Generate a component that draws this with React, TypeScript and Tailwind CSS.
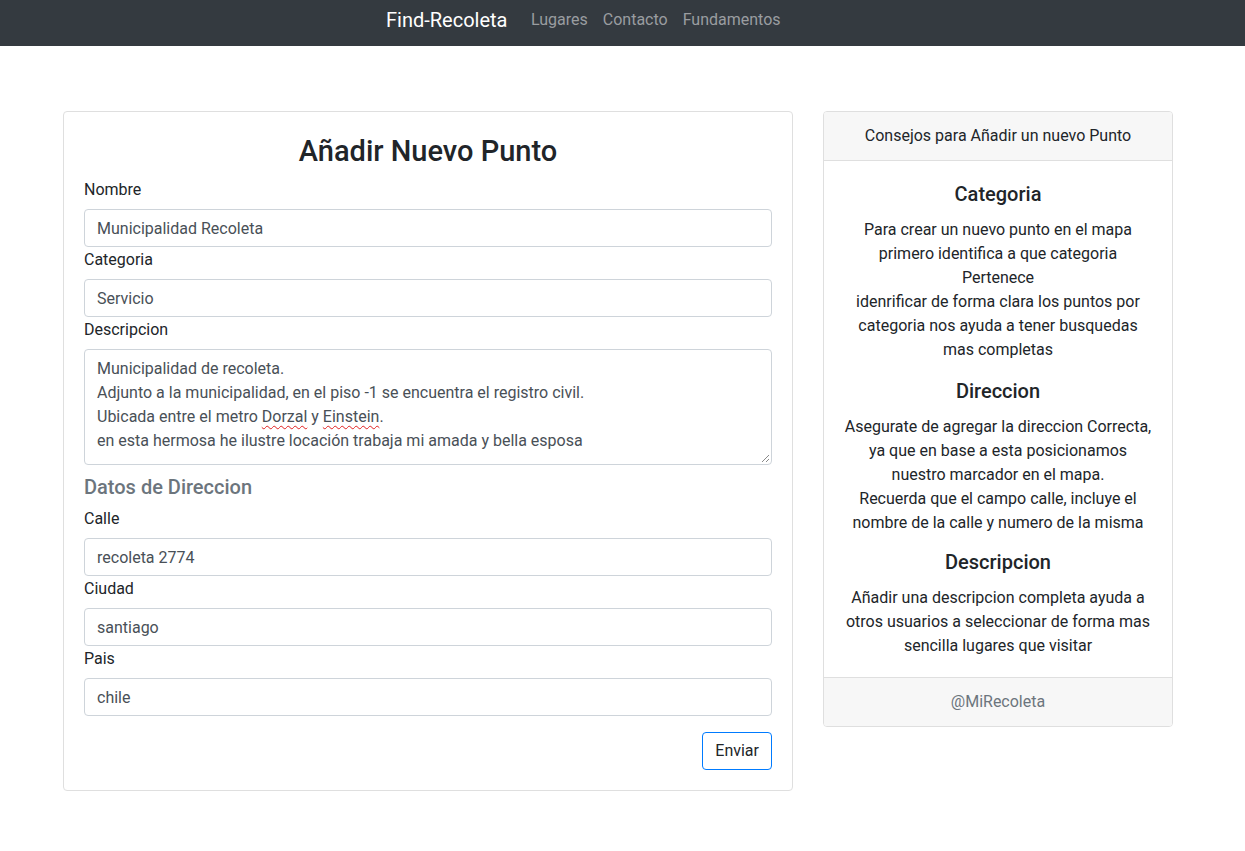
import React from "react";

const Label = ({ children }: { children: React.ReactNode }) => (
  <div className="text-[16px] leading-[26px] h-6 mb-2 text-[#212529]">{children}</div>
);

const Input = ({ value }: { value: string }) => (
  <div className="w-full h-[38px] border border-[#ced4da] rounded px-3 pt-[7px] pb-[5px] text-[16px] leading-6 text-[#495057] bg-white">
    {value}
  </div>
);

const Para = ({ lines }: { lines: string[] }) => (
  <div className="text-[16px] leading-6 text-[#212529]">
    {lines.map((l, i) => (
      <div key={i} className="whitespace-nowrap">
        {l}
      </div>
    ))}
  </div>
);

export default function App() {
  return (
    <div className="min-h-[851px] bg-white text-[#212529] font-['Roboto','Liberation_Sans',sans-serif]">
      <nav className="h-[46px] bg-[#343a40] flex items-start pl-[386px] pt-[5px]">
        <span className="text-[20px] leading-[30px] text-white mr-[16px]">Find-Recoleta</span>
        <div className="flex text-[16px] leading-[30px] text-[#9a9da0]">
          <span className="px-[7.5px]">Lugares</span>
          <span className="px-[7.5px]">Contacto</span>
          <span className="px-[7.5px]">Fundamentos</span>
        </div>
      </nav>

      <main className="flex items-start gap-[30px] pl-[63px] pt-[65px]">
        <section className="w-[730px] border border-[#dfdfdf] rounded p-5 flex flex-col">
          <h3 className="text-[29px] font-medium leading-[38px] h-[38px] mb-[7px] text-center text-[#212529]">
            Añadir Nuevo Punto
          </h3>
          <Label>Nombre</Label>
          <Input value="Municipalidad Recoleta" />
          <Label>Categoria</Label>
          <Input value="Servicio" />
          <Label>Descripcion</Label>
          <div className="relative w-full h-[116px] border border-[#ced4da] rounded px-3 pt-[7px] pb-[5px] text-[16px] leading-6 text-[#495057]">
            <div>Municipalidad de recoleta.</div>
            <div>Adjunto a la municipalidad, en el piso -1 se encuentra el registro civil.</div>
            <div>
              Ubicada entre el metro{" "}
              <span className="underline decoration-wavy decoration-[#e02020] decoration-1 underline-offset-[3px]">
                Dorzal
              </span>{" "}
              y{" "}
              <span className="underline decoration-wavy decoration-[#e02020] decoration-1 underline-offset-[3px]">
                Einstein
              </span>
              .
            </div>
            <div>en esta hermosa he ilustre locación trabaja mi amada y bella esposa</div>
            <svg className="absolute right-[1px] bottom-[1px]" width="9" height="9" viewBox="0 0 9 9">
              <line x1="8" y1="1" x2="1" y2="8" stroke="#8a8a8a" strokeWidth="1" />
              <line x1="8" y1="5" x2="5" y2="8" stroke="#8a8a8a" strokeWidth="1" />
            </svg>
          </div>
          <h5 className="text-[20px] font-medium leading-6 h-6 mt-[10px] mb-[7px] text-[#6c757d]">
            Datos de Direccion
          </h5>
          <Label>Calle</Label>
          <Input value="recoleta 2774" />
          <Label>Ciudad</Label>
          <Input value="santiago" />
          <Label>Pais</Label>
          <Input value="chile" />
          <button className="self-end mt-4 h-[38px] px-3 border border-[#007bff] rounded text-[16px] leading-6 text-[#212529] bg-white">
            Enviar
          </button>
        </section>

        <aside className="w-[350px] border border-[#dfdfdf] rounded overflow-hidden text-center">
          <div className="bg-[#f7f7f7] border-b border-[#dfdfdf] py-3 text-[16px] leading-6 text-[#212529]">
            Consejos para Añadir un nuevo Punto
          </div>
          <div className="px-5 pt-5 pb-[19px]">
            <h5 className="text-[20px] font-medium leading-6 mt-[1px] mb-[12px]">Categoria</h5>
            <div className="mb-[17px]">
              <Para
                lines={[
                  "Para crear un nuevo punto en el mapa",
                  "primero identifica a que categoria",
                  "Pertenece",
                  "idenrificar de forma clara los puntos por",
                  "categoria nos ayuda a tener busquedas",
                  "mas completas",
                ]}
              />
            </div>
            <h5 className="text-[20px] font-medium leading-6 mt-[2px] mb-3">Direccion</h5>
            <div className="mb-[15px]">
              <Para
                lines={[
                  "Asegurate de agregar la direccion Correcta,",
                  "ya que en base a esta posicionamos",
                  "nuestro marcador en el mapa.",
                  "Recuerda que el campo calle, incluye el",
                  "nombre de la calle y numero de la misma",
                ]}
              />
            </div>
            <h5 className="text-[20px] font-medium leading-6 mb-3">Descripcion</h5>
            <Para
              lines={[
                "Añadir una descripcion completa ayuda a",
                "otros usuarios a seleccionar de forma mas",
                "sencilla lugares que visitar",
              ]}
            />
          </div>
          <div className="bg-[#f7f7f7] border-t border-[#dfdfdf] py-3 text-[16px] leading-6 text-[#6c757d]">
            @MiRecoleta
          </div>
        </aside>
      </main>
    </div>
  );
}
